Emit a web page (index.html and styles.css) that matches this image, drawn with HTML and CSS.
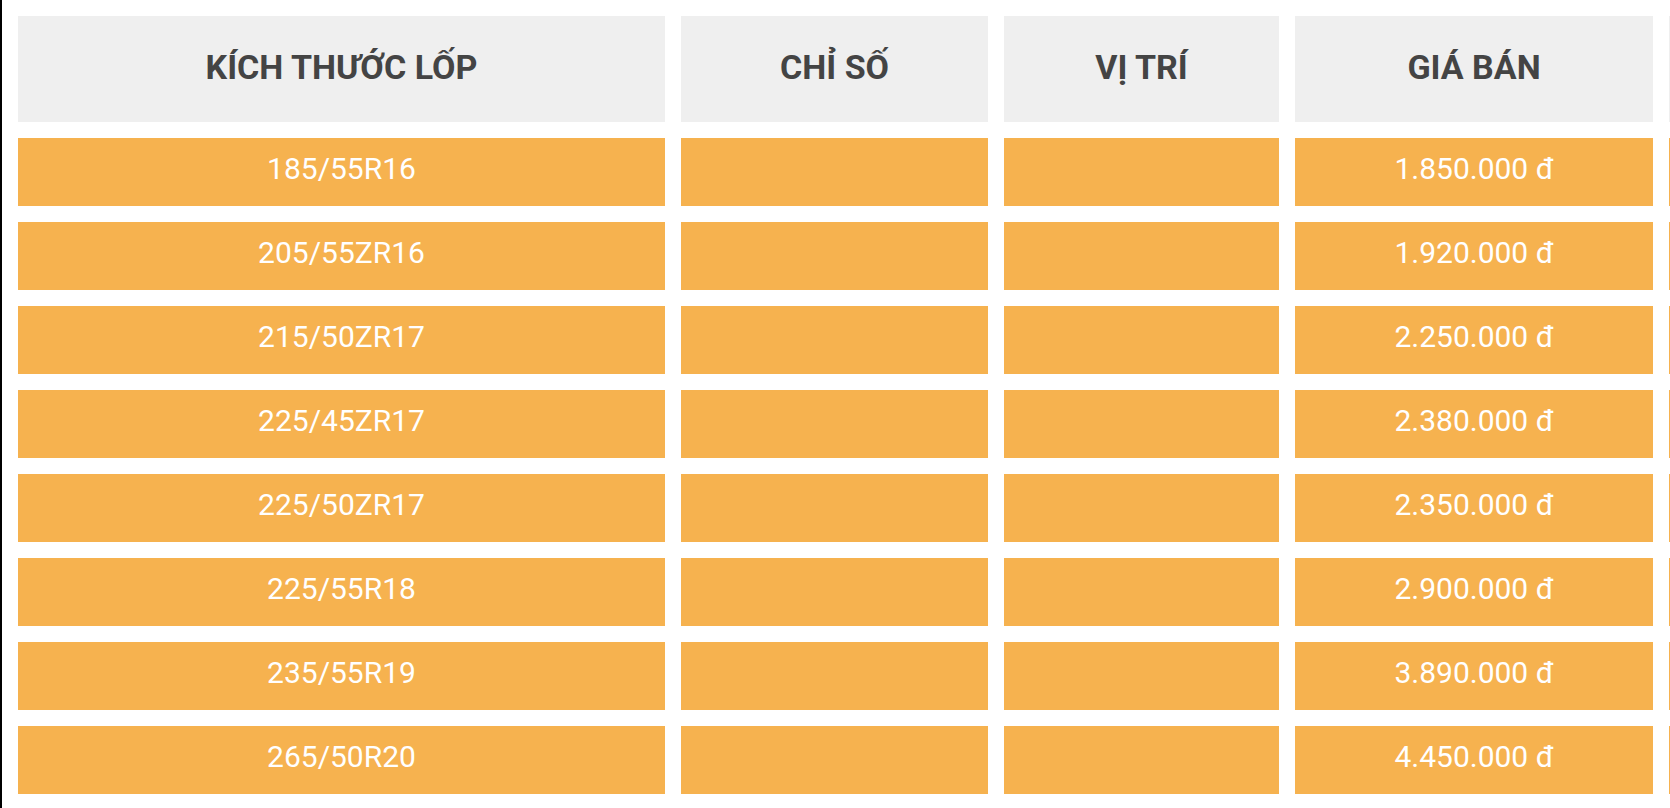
FILE: index.html
```html
<!DOCTYPE html>
<html lang="vi">
<head>
<meta charset="utf-8">
<title>Bảng giá lốp</title>
<link rel="stylesheet" href="styles.css">
</head>
<body>
<div class="page">
  <div class="grid">
    <div class="cell head">KÍCH THƯỚC LỐP</div>
    <div class="cell head">CHỈ SỐ</div>
    <div class="cell head">VỊ TRÍ</div>
    <div class="cell head">GIÁ BÁN</div>
    <div class="cell head"></div>

    <div class="cell row">185/55R16</div><div class="cell row"></div><div class="cell row"></div><div class="cell row">1.850.000 đ</div><div class="cell row"></div>
    <div class="cell row">205/55ZR16</div><div class="cell row"></div><div class="cell row"></div><div class="cell row">1.920.000 đ</div><div class="cell row"></div>
    <div class="cell row">215/50ZR17</div><div class="cell row"></div><div class="cell row"></div><div class="cell row">2.250.000 đ</div><div class="cell row"></div>
    <div class="cell row">225/45ZR17</div><div class="cell row"></div><div class="cell row"></div><div class="cell row">2.380.000 đ</div><div class="cell row"></div>
    <div class="cell row">225/50ZR17</div><div class="cell row"></div><div class="cell row"></div><div class="cell row">2.350.000 đ</div><div class="cell row"></div>
    <div class="cell row">225/55R18</div><div class="cell row"></div><div class="cell row"></div><div class="cell row">2.900.000 đ</div><div class="cell row"></div>
    <div class="cell row">235/55R19</div><div class="cell row"></div><div class="cell row"></div><div class="cell row">3.890.000 đ</div><div class="cell row"></div>
    <div class="cell row">265/50R20</div><div class="cell row"></div><div class="cell row"></div><div class="cell row">4.450.000 đ</div><div class="cell row"></div>
  </div>
</div>
</body>
</html>
```
FILE: styles.css
```css
html, body {
  margin: 0;
  padding: 0;
  background: #ffffff;
  overflow: hidden;
}
.page {
  width: 1670px;
  height: 808px;
  border-left: 2px solid #000000;
  box-sizing: border-box;
  overflow: hidden;
  font-family: Roboto, "Liberation Sans", sans-serif;
}
.grid {
  display: grid;
  grid-template-columns: 647px 307px 275px 358px 358px;
  grid-template-rows: 106px;
  grid-auto-rows: 68px;
  gap: 16px;
  padding: 16px 0 0 16px;
}
.cell {
  display: flex;
  align-items: center;
  justify-content: center;
  white-space: nowrap;
}
.head {
  background: #efefef;
  color: #444444;
  font-weight: 700;
  font-size: 34px;
  padding-bottom: 4px;
  box-sizing: border-box;
}
.row {
  background: #f6b24f;
  color: #ffffff;
  font-weight: 400;
  font-size: 30px;
  padding-bottom: 7px;
  box-sizing: border-box;
}
```
